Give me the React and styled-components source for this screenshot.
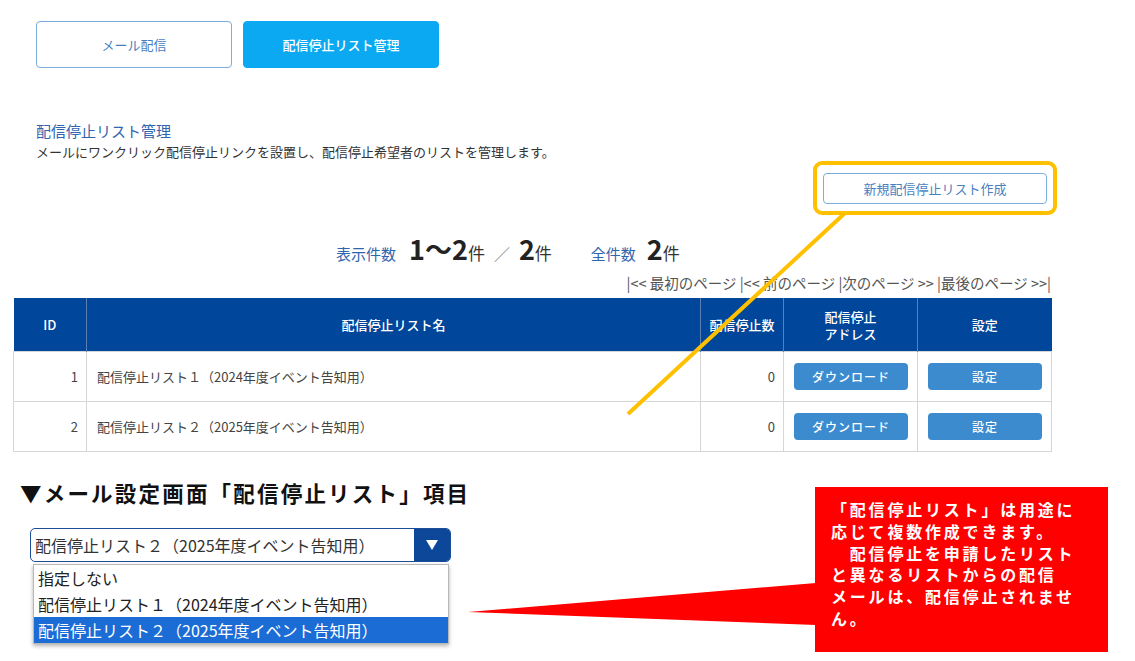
import styled, { createGlobalStyle } from 'styled-components';

const GlobalStyle = createGlobalStyle`
    body {
        margin: 0;
        background: #fff;
        font-family: "Noto Sans CJK JP", "Noto Sans", sans-serif;
        color: #333;
    }
`
const Page = styled.div`
    position: relative;
    width: 1135px;
    height: 661px;
    overflow: hidden;
    padding-top: 21px;
    box-sizing: border-box;
`
const Tabs = styled.div`
    display: flex;
    gap: 11px;
    padding-left: 36px;
`
const Tab = styled.div`
    width: 196px;
    height: 47px;
    box-sizing: border-box;
    display: flex;
    align-items: center;
    justify-content: center;
    border-radius: 4px;
    font-size: 13px;
    border: 1px solid ${p => p.$active ? '#0aa9f2' : '#7aaee0'};
    background: ${p => p.$active ? '#0aa9f2' : '#fff'};
    color: ${p => p.$active ? '#fff' : '#4a7fc1'};
    font-weight: ${p => p.$active ? 500 : 400};
`
const Section = styled.div`
    padding: 0 84px 0 13px;
    margin-top: 52px;
`
const Title = styled.h2`
    margin: 0 0 0 23px;
    font-size: 15px;
    font-weight: 400;
    line-height: 22px;
    color: #2f65ae;
`
const Lead = styled.p`
    margin: 0 0 0 23px;
    font-size: 13px;
    line-height: 20px;
    color: #333;
`
const ActionRow = styled.div`
    display: flex;
    justify-content: flex-end;
    margin-right: -6px;
    margin-top: -1px;
`
const Highlight = styled.div`
    border: 4px solid #ffc000;
    border-radius: 9px;
    padding: 8px 6px 7px;
`
const OutlineButton = styled.div`
    width: 224px;
    height: 31px;
    box-sizing: border-box;
    border: 1px solid #7aaee0;
    border-radius: 4px;
    display: flex;
    align-items: center;
    justify-content: center;
    font-size: 13px;
    color: #4a7fc1;
`
const Counts = styled.div`
    display: flex;
    align-items: baseline;
    padding-left: 323px;
    margin-top: 14px;
    height: 40px;
`
const CountLabel = styled.span`
    font-size: 15px;
    color: #2f65ae;
    margin-right: ${p => p.$gap}px;
`
const CountNum = styled.span`
    font-size: 27px;
    font-weight: 700;
    color: #222;
`
const CountUnit = styled.span`
    font-size: 17px;
    color: #333;
    margin-right: ${p => p.$gap || 0}px;
`
const Slash = styled.span`
    font-size: 16px;
    color: #888;
    margin-right: 9px;
`
const Pager = styled.div`
    text-align: right;
    font-size: 14.5px;
    line-height: 18px;
    color: #555;
    margin-top: 5px;
    margin-bottom: 6px;
`
const Table = styled.table`
    width: 1038px;
    border-collapse: collapse;
    table-layout: fixed;
    font-size: 13px;
`
const Th = styled.th`
    height: 53px;
    padding: 0;
    background: #00469a;
    color: #fff;
    font-weight: 500;
    font-size: 13px;
    line-height: 17px;
    border-left: 1px solid #5b7fb4;
    &:first-child { border-left: none; }
`
const Td = styled.td`
    height: 49px;
    padding: 0 ${p => p.$right ? '8px' : '10px'};
    border: 1px solid #d6d6d6;
    text-align: ${p => p.$center ? 'center' : p.$right ? 'right' : 'left'};
    color: #444;
    font-size: 13px;
`
const CellButton = styled.div`
    display: inline-flex;
    align-items: center;
    justify-content: center;
    width: 114px;
    height: 27px;
    border-radius: 4px;
    background: #3d8bcf;
    color: #fff;
    font-size: 12px;
    font-weight: 500;
    letter-spacing: 1px;
`
const Lower = styled.div`
    display: flex;
    margin-top: 28px;
    padding-left: 20px;
`
const LeftCol = styled.div`
    display: flex;
    flex-direction: column;
`
const Heading = styled.h3`
    margin: 0;
    font-size: 21.5px;
    line-height: 26px;
    font-weight: 700;
    color: #111;
    letter-spacing: 2.2px;
    white-space: nowrap;
`
const Select = styled.div`
    margin: 22px 0 0 10px;
    width: 421px;
    height: 34px;
    box-sizing: border-box;
    border: 1px solid #1c4e97;
    border-radius: 5px;
    display: flex;
    overflow: hidden;
`
const SelectValue = styled.div`
    flex: 1;
    display: flex;
    align-items: center;
    padding-left: 4px;
    font-size: 16px;
    color: #333;
`
const SelectArrow = styled.div`
    width: 36px;
    background: #0d4799;
    display: flex;
    align-items: center;
    justify-content: center;
`
const Dropdown = styled.div`
    margin: 2px 0 0 13px;
    width: 416px;
    box-sizing: border-box;
    border: 1px solid #b8b8b8;
    background: #fff;
    box-shadow: 0 2px 4px rgba(0, 0, 0, 0.3);
`
const Option = styled.div`
    height: 26px;
    line-height: 26px;
    padding-left: 4px;
    font-size: 16px;
    color: ${p => p.$selected ? '#fff' : '#222'};
    background: ${p => p.$selected ? '#1c6cd6' : '#fff'};
`
const Callout = styled.div`
    margin: 7px 27px 0 auto;
    width: 293px;
    height: 165px;
    box-sizing: border-box;
    background: #ff0000;
    color: #fff;
    font-size: 16px;
    font-weight: 700;
    line-height: 21.8px;
    letter-spacing: 2.8px;
    padding: 12px 0 0 16px;
    white-space: pre;
`
const Overlay = styled.svg`
    position: absolute;
    left: 0;
    top: 0;
    pointer-events: none;
`

const rows = [
    { id: 1, name: '配信停止リスト１（2024年度イベント告知用）' },
    { id: 2, name: '配信停止リスト２（2025年度イベント告知用）' },
];

const calloutText = [
    '「配信停止リスト」は用途に',
    '応じて複数作成できます。',
    '\u3000配信停止を申請したリスト',
    'と異なるリストからの配信',
    'メールは、配信停止されませ',
    'ん。',
].join('\n');

export default function App() {
    return (
        <>
            <GlobalStyle />
            <Page>
                <Tabs>
                    <Tab>メール配信</Tab>
                    <Tab $active>配信停止リスト管理</Tab>
                </Tabs>
                <Section>
                    <Title>配信停止リスト管理</Title>
                    <Lead>メールにワンクリック配信停止リンクを設置し、配信停止希望者のリストを管理します。</Lead>
                    <ActionRow>
                        <Highlight>
                            <OutlineButton>新規配信停止リスト作成</OutlineButton>
                        </Highlight>
                    </ActionRow>
                    <Counts>
                        <CountLabel $gap={13}>表示件数</CountLabel>
                        <CountNum>1〜2</CountNum>
                        <CountUnit $gap={9}>件</CountUnit>
                        <Slash>／</Slash>
                        <CountNum>2</CountNum>
                        <CountUnit $gap={39}>件</CountUnit>
                        <CountLabel $gap={11}>全件数</CountLabel>
                        <CountNum>2</CountNum>
                        <CountUnit>件</CountUnit>
                    </Counts>
                    <Pager>|&lt;&lt; 最初のページ |&lt;&lt; 前のページ |次のページ &gt;&gt; |最後のページ &gt;&gt;|</Pager>
                    <Table>
                        <colgroup>
                            <col style={{ width: 73 }} />
                            <col style={{ width: 614 }} />
                            <col style={{ width: 83 }} />
                            <col style={{ width: 134 }} />
                            <col style={{ width: 134 }} />
                        </colgroup>
                        <thead>
                            <tr>
                                <Th>ID</Th>
                                <Th>配信停止リスト名</Th>
                                <Th>配信停止数</Th>
                                <Th>配信停止<br />アドレス</Th>
                                <Th>設定</Th>
                            </tr>
                        </thead>
                        <tbody>
                            {rows.map(row => (
                                <tr key={row.id}>
                                    <Td $right>{row.id}</Td>
                                    <Td>{row.name}</Td>
                                    <Td $right>0</Td>
                                    <Td $center><CellButton>ダウンロード</CellButton></Td>
                                    <Td $center><CellButton>設定</CellButton></Td>
                                </tr>
                            ))}
                        </tbody>
                    </Table>
                </Section>
                <Lower>
                    <LeftCol>
                        <Heading>▼メール設定画面「配信停止リスト」項目</Heading>
                        <Select>
                            <SelectValue>配信停止リスト２（2025年度イベント告知用）</SelectValue>
                            <SelectArrow>
                                <svg width="12" height="10" viewBox="0 0 12 10">
                                    <path d="M0 0 H12 L6 10 Z" fill="#fff" />
                                </svg>
                            </SelectArrow>
                        </Select>
                        <Dropdown>
                            <Option>指定しない</Option>
                            <Option>配信停止リスト１（2024年度イベント告知用）</Option>
                            <Option $selected>配信停止リスト２（2025年度イベント告知用）</Option>
                        </Dropdown>
                    </LeftCol>
                    <Callout>{calloutText}</Callout>
                </Lower>
                <Overlay width="1135" height="661" viewBox="0 0 1135 661">
                    <line x1="845" y1="213" x2="628" y2="414" stroke="#ffc000" strokeWidth="4" />
                    <polygon points="468,612 816,583 816,625" fill="#ff0000" />
                </Overlay>
            </Page>
        </>
    );
}
